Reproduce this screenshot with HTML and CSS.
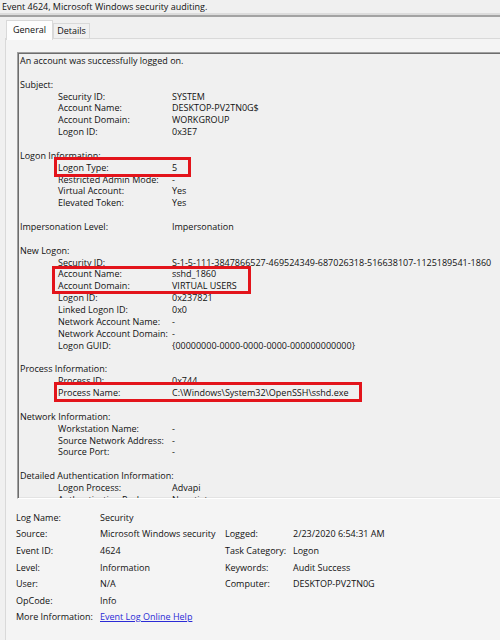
FILE: index.html
```html
<!DOCTYPE html>
<html>
<head>
<meta charset="utf-8">
<link rel="stylesheet" href="styles.css">
</head>
<body>
<div class="page">
  <div class="title">Event 4624, Microsoft Windows security auditing.</div>
  <div class="tabs">
    <div class="tab active">General</div>
    <div class="tab">Details</div>
  </div>
  <div class="panel">
    <div class="message">
      <div class="line">An account was successfully logged on.</div>

      <div class="sec">
        <div class="line">Subject:</div>
        <div class="row"><span class="k">Security ID:</span><span class="v">SYSTEM</span></div>
        <div class="row"><span class="k">Account Name:</span><span class="v">DESKTOP-PV2TN0G$</span></div>
        <div class="row"><span class="k">Account Domain:</span><span class="v">WORKGROUP</span></div>
        <div class="row"><span class="k">Logon ID:</span><span class="v">0x3E7</span></div>
      </div>

      <div class="sec">
        <div class="line">Logon Information:</div>
        <div class="row"><span class="k">Logon Type:</span><span class="v">5</span></div>
        <div class="row"><span class="k">Restricted Admin Mode:</span><span class="v">-</span></div>
        <div class="row"><span class="k">Virtual Account:</span><span class="v">Yes</span></div>
        <div class="row"><span class="k">Elevated Token:</span><span class="v">Yes</span></div>
      </div>

      <div class="sec">
        <div class="row flat"><span class="k">Impersonation Level:</span><span class="v">Impersonation</span></div>
      </div>

      <div class="sec">
        <div class="line">New Logon:</div>
        <div class="row"><span class="k">Security ID:</span><span class="v">S-1-5-111-3847866527-469524349-687026318-516638107-1125189541-1860</span></div>
        <div class="row"><span class="k">Account Name:</span><span class="v">sshd_1860</span></div>
        <div class="row"><span class="k">Account Domain:</span><span class="v">VIRTUAL USERS</span></div>
        <div class="row"><span class="k">Logon ID:</span><span class="v">0x237821</span></div>
        <div class="row"><span class="k">Linked Logon ID:</span><span class="v">0x0</span></div>
        <div class="row"><span class="k">Network Account Name:</span><span class="v">-</span></div>
        <div class="row"><span class="k">Network Account Domain:</span><span class="v">-</span></div>
        <div class="row"><span class="k">Logon GUID:</span><span class="v">{00000000-0000-0000-0000-000000000000}</span></div>
      </div>

      <div class="sec">
        <div class="line">Process Information:</div>
        <div class="row"><span class="k">Process ID:</span><span class="v">0x744</span></div>
        <div class="row"><span class="k">Process Name:</span><span class="v">C:\Windows\System32\OpenSSH\sshd.exe</span></div>
      </div>

      <div class="sec">
        <div class="line">Network Information:</div>
        <div class="row"><span class="k">Workstation Name:</span><span class="v">-</span></div>
        <div class="row"><span class="k">Source Network Address:</span><span class="v">-</span></div>
        <div class="row"><span class="k">Source Port:</span><span class="v">-</span></div>
      </div>

      <div class="sec">
        <div class="line">Detailed Authentication Information:</div>
        <div class="row"><span class="k">Logon Process:</span><span class="v">Advapi</span></div>
        <div class="row"><span class="k">Authentication Package:</span><span class="v">Negotiate</span></div>
      </div>
    </div>

    <div class="props">
      <span>Log Name:</span><span>Security</span><span></span><span></span>
      <span>Source:</span><span>Microsoft Windows security</span><span>Logged:</span><span>2/23/2020 6:54:31 AM</span>
      <span>Event ID:</span><span>4624</span><span>Task Category:</span><span>Logon</span>
      <span>Level:</span><span>Information</span><span>Keywords:</span><span>Audit Success</span>
      <span>User:</span><span>N/A</span><span>Computer:</span><span>DESKTOP-PV2TN0G</span>
      <span>OpCode:</span><span>Info</span><span></span><span></span>
      <span>More Information:</span><span class="wide"><a class="link" href="#">Event Log Online Help</a></span>
    </div>
  </div>

  <div class="mark mark-type"></div>
  <div class="mark mark-account"></div>
  <div class="mark mark-process"></div>
</div>
</body>
</html>
```

FILE: styles.css
```css
* { box-sizing: border-box; }
html, body {
  margin: 0;
  padding: 0;
  overflow: hidden;
  background: #f0f0f0;
}
.page {
  position: relative;
  width: 500px;
  height: 640px;
  overflow: hidden;
  font-family: "Open Sans", "Noto Sans", sans-serif;
  font-size: 9px;
  color: #111;
  background: #f0f0f0;
}
.title {
  height: 17px;
  padding-left: 2px;
  line-height: 13px;
  border-bottom: 2px solid #a3a3a3;
  box-shadow: inset 0 -2px 0 #dcdcdc;
}
.tabs {
  display: flex;
  align-items: flex-end;
  height: 23px;
  padding-left: 6px;
  margin-bottom: -2px;
  position: relative;
  z-index: 1;
}
.tab {
  height: 15px;
  line-height: 14px;
  padding: 0 3px;
  border: 1px solid #d9d9d9;
  border-bottom: none;
  background: #f0f0f0;
  margin-bottom: 2px;
}
.tab.active {
  height: 20px;
  line-height: 17px;
  padding: 0 6px;
  background: #fdfdfd;
  margin-bottom: 0;
}
.panel {
  margin-left: 5px;
  border-top: 1px solid #d9d9d9;
  border-left: 1px solid #d9d9d9;
  background: #f4f4f4;
  padding: 13px 0 0 11px;
  height: 620px;
  overflow: hidden;
}
.message {
  width: 520px;
  height: 447px;
  overflow: hidden;
  background: #f0f0f0;
  border: 1px solid;
  border-color: #a0a0a0 #ffffff #ffffff #a0a0a0;
  box-shadow: inset 1px 1px 0 #6d6d6d, inset 0 -1px 0 #e3e3e3;
  padding: 2px 0 0 2px;
  line-height: 11.86px;
  white-space: nowrap;
}
.sec { margin-top: 11.86px; }
.line { height: 11.86px; }
.row {
  display: flex;
  height: 11.86px;
  padding-left: 38px;
}
.k { min-width: 114px; padding-right: 3px; }
.row.flat { padding-left: 0; }
.row.flat .k { min-width: 152px; }
.props {
  display: grid;
  grid-template-columns: 84px 125px 68px auto;
  grid-auto-rows: 16.6px;
  align-items: center;
  margin: 10px 0 0 -1px;
  white-space: nowrap;
}
.props .wide { grid-column: 2 / span 3; }
.link {
  color: #2b2bd6;
  text-decoration: underline;
}
.mark {
  position: absolute;
  border: 3px solid #e3141b;
}
.mark-type { left: 54px; top: 157px; width: 137px; height: 20px; }
.mark-account { left: 52px; top: 266px; width: 199px; height: 28px; }
.mark-process { left: 54px; top: 382px; width: 308px; height: 20px; }
```
